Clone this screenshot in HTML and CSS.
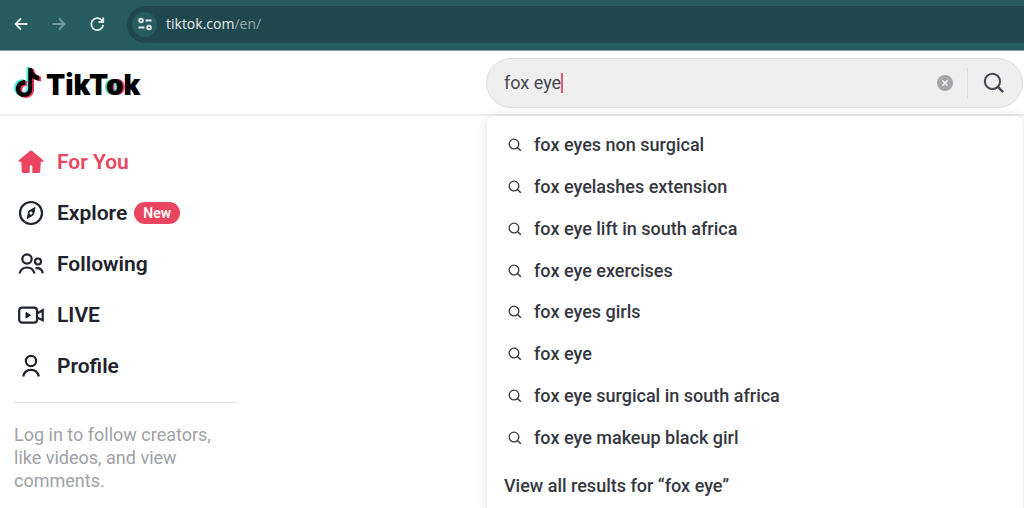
FILE: index.html
```html
<!DOCTYPE html>
<html lang="en">
<head>
<meta charset="utf-8">
<title>TikTok</title>
<link rel="stylesheet" href="styles.css">
</head>
<body>
<svg class="sprite" aria-hidden="true">
  <symbol id="search" viewBox="0 0 24 24"><circle cx="10.3" cy="10.3" r="8.3" fill="none" stroke="currentColor" stroke-width="2.2"/><path d="M16.2 16.2 22 22" fill="none" stroke="currentColor" stroke-width="2.5"/></symbol>
</svg>
<div class="browser-bar">
  <button class="nav-btn" aria-label="Back"><svg viewBox="0 0 16 16"><path d="M8 2.500 2.500 8 8 13.500M2.500 8H14.500"/></svg></button>
  <button class="nav-btn nav-btn-off" aria-label="Forward"><svg viewBox="0 0 16 16"><path d="M8 2.500 13.500 8 8 13.500M13.500 8H1.500"/></svg></button>
  <button class="nav-btn" aria-label="Reload"><svg viewBox="0 0 16 16"><path d="M14.200 9A6 6 0 1 1 12.600 4L14 5.500M14.200 1.500V6H9.500"/></svg></button>
  <div class="address">
    <button class="site-info" aria-label="Site information"><svg viewBox="0 0 16 16"><circle cx="4" cy="4.500" r="1.900"/><path d="M8.500 4.500H14.500M1.500 11.500H7.500"/><circle cx="12" cy="11.500" r="1.900"/></svg></button>
    <span class="url">tiktok.com<span class="url-path">/en/</span></span>
  </div>
</div>
<header class="header">
  <a class="logo" href="#" aria-label="TikTok">
    <svg class="logo-note" viewBox="0 0 28 32">
      <defs><path id="note" d="M13.500 0H17.500C18 4.500 20.500 7.300 24.500 7.800V12.500C22 12.200 19.500 11.500 17.500 10V20.500C17.500 26 13.700 29 9.300 29C4.600 29 1 25.500 1 21C1 15.500 5.400 11.700 10.500 12V16.800C7.800 16.500 5.600 18.400 5.600 21C5.600 23.200 7.200 24.800 9.300 24.800C11.600 24.800 13.500 23.200 13.500 20.500Z"/></defs>
      <use href="#note" class="note-cyan" x="-1"/><use href="#note" x="2.600" y="2" class="note-red"/><use href="#note" x="0.800" y="1"/>
    </svg>
    <span class="wordmark">TikT<span class="wordmark-o">o</span>k</span>
  </a>
  <form class="search">
    <div class="field">
      <input class="query" type="text" aria-label="Search" value="fox eye"><span class="caret"></span>
    </div>
    <button class="clear" type="button" aria-label="Clear"><svg viewBox="0 0 16 16"><circle cx="8" cy="8" r="8" fill="#a5a6aa"/><path d="M5.300 5.300 10.700 10.700M10.700 5.300 5.300 10.700" stroke="#f1f1f1" stroke-width="1.500"/></svg></button>
    <span class="divider"></span>
    <button class="submit" type="button" aria-label="Search"><svg><use href="#search"/></svg></button>
    <div class="menu">
      <ul class="suggestions">
        <li><a href="#"><svg><use href="#search"/></svg>fox eyes non surgical</a></li>
        <li><a href="#"><svg><use href="#search"/></svg>fox eyelashes extension</a></li>
        <li><a href="#"><svg><use href="#search"/></svg>fox eye lift in south africa</a></li>
        <li><a href="#"><svg><use href="#search"/></svg>fox eye exercises</a></li>
        <li><a href="#"><svg><use href="#search"/></svg>fox eyes girls</a></li>
        <li><a href="#"><svg><use href="#search"/></svg>fox eye</a></li>
        <li><a href="#"><svg><use href="#search"/></svg>fox eye surgical in south africa</a></li>
        <li><a href="#"><svg><use href="#search"/></svg>fox eye makeup black girl</a></li>
      </ul>
      <a class="view-all" href="#">View all results for “fox eye”</a>
    </div>
  </form>
</header>
<aside class="sidebar">
  <nav class="links">
    <a class="link link-active" href="#"><svg viewBox="0 0 26 26"><path d="M11.800 1.900Q13 1 14.200 1.900L25 10.900Q26.300 12.300 24.600 12.700H22.800L22.200 22.500Q22 24 20.500 24H14.300V17.500Q14.300 16.300 13 16.300T11.700 17.500V24H5.500Q4 24 3.800 22.500L3.200 12.700H1.400Q-.3 12.300 1 10.900Z" fill="currentColor"/></svg>For You</a>
    <a class="link" href="#"><svg class="line" viewBox="0 0 26 26"><circle cx="13" cy="13" r="11"/><path d="M17 7.500 15.500 14.800 9.200 18.500 10.700 11.200Z" fill="currentColor" stroke-width="1"/><circle cx="13" cy="13" r="1.500" fill="#fff" stroke="none"/></svg>Explore<span class="badge">New</span></a>
    <a class="link" href="#"><svg class="line" viewBox="0 0 26 26"><circle cx="9" cy="8" r="4.700"/><path d="M1.500 22.500C2.500 18.500 5.300 16.500 9 16.500S15.500 18.500 16.500 22.500"/><circle cx="20" cy="10.500" r="3"/><path d="M17.500 17.400C21.300 16.700 24 18.500 24.800 22.300"/></svg>Following</a>
    <a class="link" href="#"><svg class="line" viewBox="0 0 26 26"><rect x="1.200" y="5.700" width="17.800" height="15" rx="3"/><path d="M19 11.500 24.700 8.200V18.200L19 15.500"/><path d="M8 10.500V16L12.500 13.200Z" fill="currentColor" stroke-width="1"/></svg>LIVE</a>
    <a class="link" href="#"><svg class="line" viewBox="0 0 26 26"><circle cx="13" cy="8" r="5.100"/><path d="M5.200 23.500C6 19 9 16.800 13 16.800S20 19 20.800 23.500"/></svg>Profile</a>
  </nav>
  <p class="hint">Log in to follow creators, like videos, and view comments.</p>
</aside>
</body>
</html>
```
FILE: styles.css
```css
* { box-sizing: border-box; }
body {
  margin: 0;
  min-height: 100vh;
  overflow: hidden;
  background: #fff;
  color: #20222d;
  font-family: Roboto, "Liberation Sans", sans-serif;
}
a { color: inherit; text-decoration: none; }
button { padding: 0; border: 0; background: none; color: inherit; }
svg { display: block; flex: none; }
.sprite { position: absolute; width: 0; height: 0; }

.browser-bar {
  display: flex;
  align-items: center;
  gap: 22px;
  height: 51px;
  padding: 0 0 2px 13px;
  background: #265b60;
  border-bottom: 1px solid #7ea2a5;
  color: #e6eeee;
}
.nav-btn svg, .site-info svg {
  width: 16px;
  height: 16px;
  fill: none;
  stroke: currentColor;
  stroke-width: 1.8;
}
.nav-btn-off { color: #73999c; }
.address {
  display: flex;
  flex: 1;
  align-items: center;
  gap: 9px;
  height: 37px;
  padding-left: 5px;
  border-radius: 19px 0 0 19px;
  background: #21474e;
}
.site-info {
  display: grid;
  place-items: center;
  width: 25px;
  height: 25px;
  border-radius: 50%;
  background: #265b60;
}
.url { font: 500 14px/20px "Open Sans", sans-serif; }
.url-path { color: #93abae; }

.header {
  display: flex;
  align-items: center;
  height: 65px;
  padding-right: 1px;
  border-bottom: 2px solid #eeeeee;
}
.logo {
  display: flex;
  flex: 0 0 486px;
  align-items: center;
  gap: 4px;
  padding-left: 14px;
  color: #000;
}
.logo-note { width: 28px; height: 32px; overflow: visible; }
.note-cyan { fill: #4de8e4; }
.note-red { fill: #f23a5f; }
.wordmark { padding-top: 4px; font: 900 28px/32px Inter, sans-serif; }
.wordmark-o { text-shadow: -2px 0 #4de8e4, 2px 0 #f23a5f; }

.search {
  position: relative;
  display: flex;
  flex: 1;
  align-items: center;
  height: 50px;
  padding: 0 17px;
  border: 1px solid #dddddd;
  border-radius: 25px;
  background: #efefef;
  color: #454650;
}
.field { display: flex; flex: 1; align-items: center; }
.query {
  field-sizing: content;
  padding: 0;
  border: 0;
  outline: 0;
  background: none;
  color: inherit;
  font: 18px/24px Roboto, sans-serif;
}
.caret { width: 2px; height: 20px; background: #ea5371; }
.clear svg { width: 16px; height: 16px; }
.divider { width: 1px; height: 30px; margin: 0 15px 0 14px; background: #dcdcdc; }
.submit svg { width: 22px; height: 22px; }

.menu {
  position: absolute;
  top: 57px;
  left: 0;
  right: -1px;
  padding: 9px 17px 16px;
  border-radius: 8px;
  background: #fff;
  box-shadow: 0 0 12px rgba(0, 0, 0, 0.12);
  color: #353741;
  font-size: 18px;
  font-weight: 500;
  line-height: 24px;
}
.suggestions {
  display: grid;
  grid-auto-rows: 1fr;
  height: 334px;
  margin: 0 0 15px;
  padding: 0;
  list-style: none;
}
.suggestions a { display: flex; align-items: center; gap: 12px; height: 100%; padding-left: 4px; }
.suggestions svg { width: 14px; height: 14px; }
.view-all { display: block; }

.sidebar { width: 237px; padding: 20px 0 0 14px; }
.links {
  display: grid;
  grid-auto-rows: 1fr;
  height: 267px;
  padding-bottom: 10px;
  border-bottom: 1px solid #e8e8e8;
}
.link {
  display: flex;
  align-items: center;
  padding-left: 4px;
  font-size: 21px;
  font-weight: 600;
  line-height: 24px;
}
.link svg { width: 26px; height: 26px; margin-right: 13px; }
.line { fill: none; stroke: currentColor; stroke-width: 2.2; }
.link-active { color: #ea4560; }
.badge {
  margin-left: 7px;
  padding: 0 9px;
  border-radius: 11px;
  background: #ea4560;
  color: #fff;
  font-size: 14px;
  font-weight: 600;
  line-height: 22px;
}
.hint { margin: 20px 0 0; color: #a0a1a6; font-size: 18px; line-height: 23px; }
```
